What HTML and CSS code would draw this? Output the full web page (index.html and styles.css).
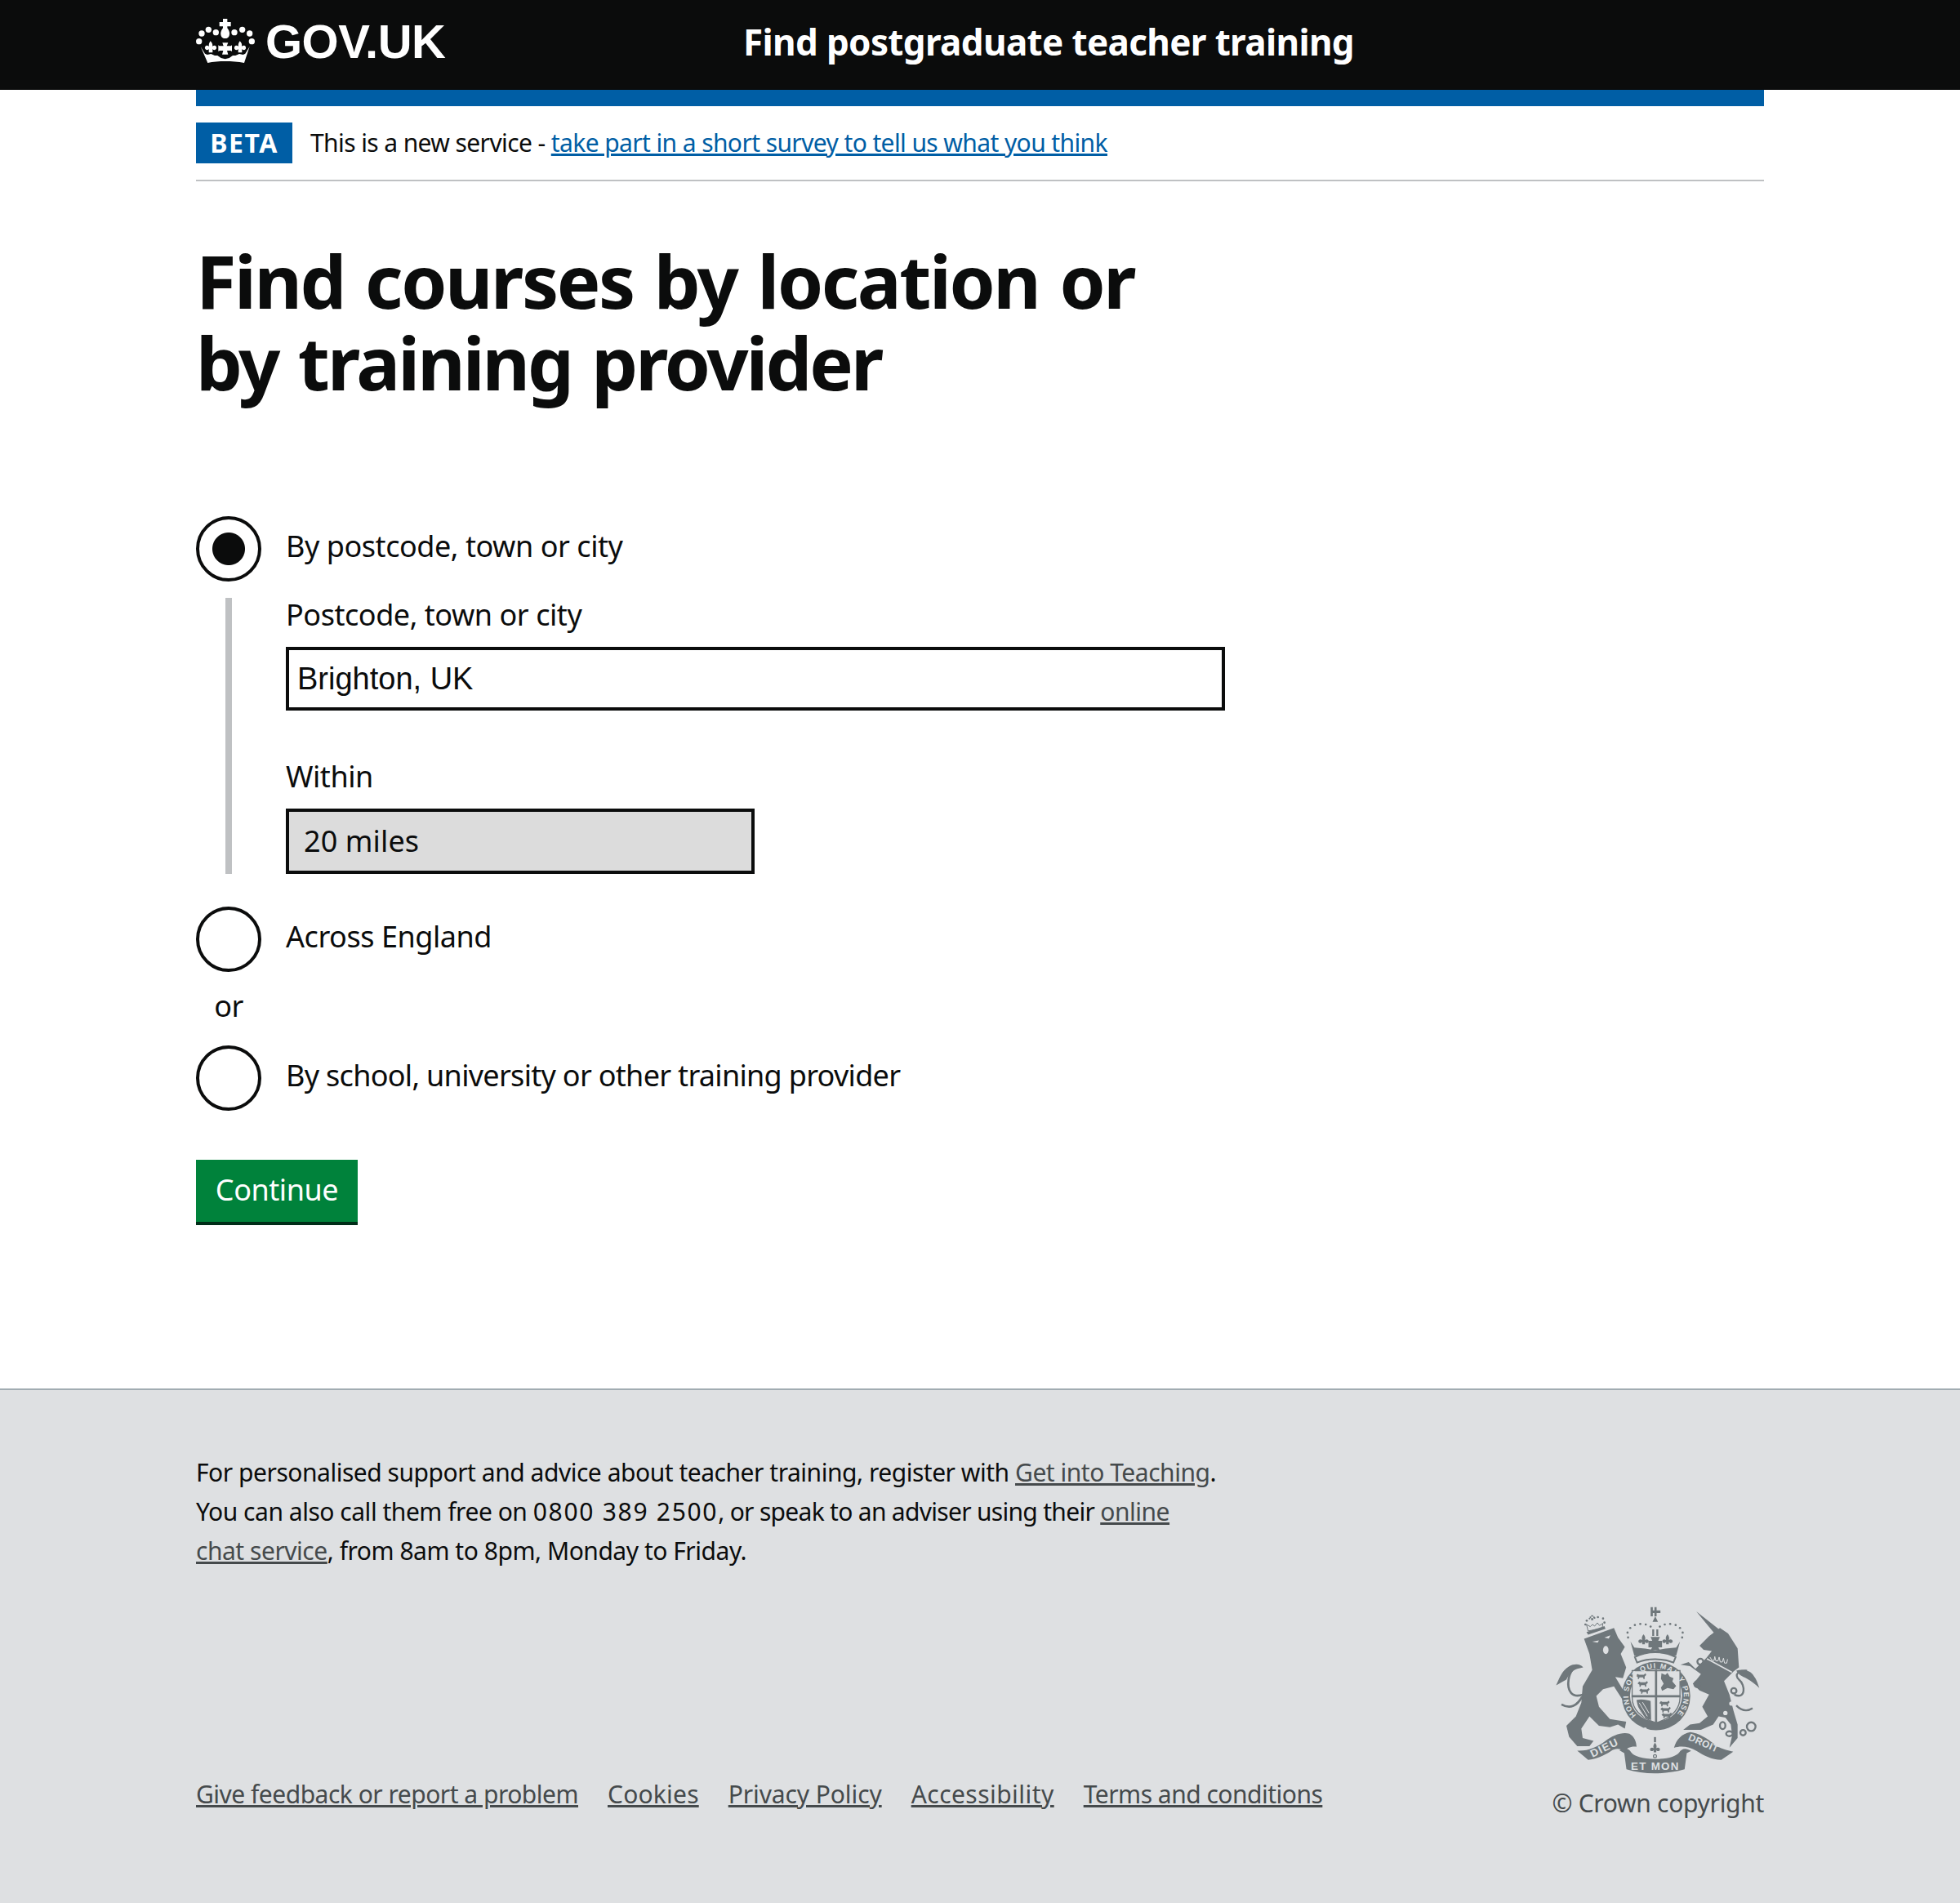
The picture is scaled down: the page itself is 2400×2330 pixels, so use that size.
FILE: index.html
```html
<!DOCTYPE html>
<html lang="en">
<head>
<meta charset="utf-8">
<title>Find postgraduate teacher training</title>
<link rel="stylesheet" href="styles.css">
</head>
<body>
<header class="site-header">
  <div class="wrap header-inner">
    <a class="logo" href="#">
      <svg class="crown" viewBox="0 0 270 210" aria-hidden="true">
        <g fill="#fff">
          <circle cx="26" cy="107" r="11"/><circle cx="36" cy="78" r="11"/><circle cx="61" cy="64" r="11"/><circle cx="88" cy="74" r="11"/>
          <circle cx="156" cy="74" r="11"/><circle cx="185" cy="64" r="11"/><circle cx="212" cy="78" r="11"/><circle cx="220" cy="107" r="11"/>
          <path d="M114 24h16v12h13v16h-13v6c8 10 10 20 7 28-2 7-8 10-15 10s-13-3-15-10c-3-8-1-18 7-28v-6h-13V36h13z"/>
          <path d="M68 106c6 6 9 12 7 19 6-4 13-3 15 3 2 7-4 12-11 10l-3-3v13h-14v-13l-3 3c-7 2-13-3-11-10 2-6 9-7 15-3-2-7 1-13 5-19z"/>
          <path d="M176 106c6 6 9 12 7 19 6-4 13-3 15 3 2 7-4 12-11 10l-3-3v13h-14v-13l-3 3c-7 2-13-3-11-10 2-6 9-7 15-3-2-7 1-13 5-19z"/>
          <path d="M112 112h21l-5 12h15l4-3v23l-5-3h-13l4 14h-22l4-14h-13l-5 3v-23l4 3h15z"/>
          <path d="M32 126l16 26 8 4 14-3 14 6h10l13 9 15 4 15-4 13-9h10l14-6 14 3 8-4 16-26-20 60c-45-8-95-8-134 0z"/>
        </g>
      </svg>
      <span class="logo-text">GOV.UK</span>
    </a>
    <a class="service-name" href="#">Find postgraduate teacher training</a>
  </div>
</header>

<div class="wrap">
  <div class="blue-bar"></div>
  <div class="phase-banner">
    <strong class="phase-tag">BETA</strong>
    <span class="phase-text">This is a new service - <a class="link" href="#">take part in a short survey to tell us what you think</a></span>
  </div>

  <main class="main">
    <h1 class="title">Find courses by location or<br><span class="title-second">by training provider</span></h1>

    <form class="form">
      <label class="radio-row">
        <input class="radio" type="radio" name="l" checked>
        <span class="radio-label">By postcode, town or city</span>
      </label>
      <div class="conditional">
        <label class="field-label" for="q">Postcode, town or city</label>
        <input class="text-input" id="q" type="text" value="Brighton, UK">
        <label class="field-label field-label-second" for="r">Within</label>
        <select class="select" id="r"><option>20 miles</option></select>
      </div>
      <label class="radio-row radio-row-gap">
        <input class="radio" type="radio" name="l">
        <span class="radio-label">Across England</span>
      </label>
      <div class="or">or</div>
      <label class="radio-row">
        <input class="radio" type="radio" name="l">
        <span class="radio-label radio-label-long">By school, university or other training provider</span>
      </label>
      <button class="button" type="button">Continue</button>
    </form>
  </main>
</div>

<footer class="footer">
  <div class="wrap">
    <p class="support">For personalised support and advice about teacher training, register with <a class="foot-link" href="#">Get into Teaching</a>.<br>You can also call them free on <span class="tel">0800 389 2500</span><span class="tight">, or speak to an adviser using their </span><a class="foot-link" href="#">online<br>chat service</a>, from 8am to 8pm, Monday to Friday.</p>
    <div class="footer-meta">
      <ul class="foot-links">
        <li><a class="foot-link" href="#">Give feedback or report a problem</a></li>
        <li class="wide"><a class="foot-link" href="#">Cookies</a></li>
        <li class="mid"><a class="foot-link" href="#">Privacy Policy</a></li>
        <li class="wider"><a class="foot-link" href="#">Accessibility</a></li>
        <li><a class="foot-link" href="#">Terms and conditions</a></li>
      </ul>
      <div class="copyright">
        <svg class="crest" viewBox="60 70 770 625" aria-hidden="true">
          <defs>
            <path id="pl" d="M0 9l6-7 5 3h18l6-5 3 6-6 6v9h-4l-2-6H13l-2 6H7v-7z"/>
            <path id="arc" d="M367 476A102 102 0 1 1 513 476"/>
            <g id="fl"><path d="M0-24c6 7 8 14 5 21 6-4 13-2 14 4 1 6-5 9-10 7l-4-3v8H-5V5l-4 3c-5 2-11-1-10-7 1-6 8-8 14-4-3-7-1-14 5-21z"/></g>
          </defs>
          <g fill="#6f777b">
            <!-- lion -->
            <path d="M175 195L285 155 300 190 325 225 310 250 330 300 318 340 290 335 335 410 345 440 325 432 285 370 245 380 220 405 230 445 270 490 330 500 325 525 300 510 270 520 230 515 195 480 165 525 170 560 210 570 195 590 150 590 120 555 110 515 145 480 165 430 170 370 205 310 195 250z"/>
            <g fill="none" stroke="#6f777b" stroke-width="8">
              <path d="M172 400C130 415 112 385 118 345 122 315 140 292 162 296"/>
              <path d="M168 408C150 440 125 455 92 436"/>
            </g>
            <path d="M72 366C85 340 92 312 120 296 140 286 160 286 172 300L150 305C130 310 115 335 110 345 100 350 85 360 72 366z"/>
            <path d="M184 170l66-22 4 10-64 22z"/>
            <g fill="#dee0e2"><ellipse cx="255" cy="236" rx="10" ry="15"/><path d="M205 205l25-4-5 8zM250 190l22-8-6 12z"/></g>
            <path d="M201 126h8v-18h-8zM196 113h18v6h-18z"/>
            <path d="M190 166l-6-24 14 8 8-8 8 6 10-12 8 10 12-8-2 18z" fill="none" stroke="#6f777b" stroke-width="3"/>
            <g><circle cx="180" cy="142" r="4"/><circle cx="185" cy="128" r="4"/><circle cx="226" cy="115" r="4"/><circle cx="245" cy="120" r="4"/><circle cx="250" cy="135" r="4"/><circle cx="214" cy="118" r="3"/><circle cx="195" cy="120" r="3"/></g>
            <!-- crown -->
            <path d="M428 90h6V78h8v12h14v10h-14v12h-8v-12h-6v12h-8V78h8z"/>
            <path d="M437 112l10 20h-20zM426 160h7v24h-7zM441 160h7v24h-7z"/>
            <g>
              <circle cx="337" cy="190" r="4"/><circle cx="335" cy="172" r="4"/><circle cx="345" cy="155" r="4"/><circle cx="362" cy="144" r="4"/><circle cx="382" cy="140" r="4"/><circle cx="402" cy="142" r="4"/><circle cx="420" cy="150" r="4"/><circle cx="454" cy="150" r="4"/><circle cx="472" cy="142" r="4"/><circle cx="492" cy="140" r="4"/><circle cx="512" cy="144" r="4"/><circle cx="528" cy="155" r="4"/><circle cx="538" cy="172" r="4"/><circle cx="536" cy="190" r="4"/>
            </g>
            <use href="#fl" x="394" y="202"/><use href="#fl" x="482" y="202"/>
            <path d="M420 188h34l-6 14h14v24h-14l6 10h-34l6-10h-14v-24h14z"/>
            <path d="M346 205l14 22 40 4 37 6 37-6 40-4 14-22-14 52H360z"/>
            <path d="M362 262c45-24 105-24 150 0l-8 20c-40-16-94-16-134 0z" fill="#dee0e2" stroke="#6f777b" stroke-width="6"/>
            <!-- garter -->
            <circle cx="440" cy="405" r="126"/>
            <circle cx="440" cy="403" r="96" fill="#dee0e2"/>
            <path d="M352 312h176v98c0 48-40 78-88 94-48-16-88-46-88-94z" fill="#dee0e2" stroke="#6f777b" stroke-width="4"/>
            <path d="M436 308h8v198h-8zM350 402h180v8H350z"/>
            <use href="#pl" x="366" y="322"/><use href="#pl" x="372" y="350"/><use href="#pl" x="378" y="376"/>
            <use href="#pl" x="452" y="422"/><use href="#pl" x="456" y="445"/><use href="#pl" x="460" y="466"/>
            <path d="M460 322l14 6 8-8 8 14 14 6-4 12 14 16-10 12-22-4-20 10-4-12 10-14-10-18z"/>
            <path d="M368 420c20-5 40 0 52 4l2 70c-30-8-46-30-54-74z"/>
            <g fill="none" stroke="#dee0e2" stroke-width="3"><path d="M378 430l30 50M390 428l24 40M372 445l26 40"/></g>
            <text class="crest-text garter"><textPath href="#arc" textLength="470" lengthAdjust="spacing">HONI SOIT QUI MAL Y PENSE</textPath></text>
            <circle cx="400" cy="527" r="6" fill="#dee0e2"/><circle cx="447" cy="541" r="6" fill="#dee0e2"/>
            <!-- unicorn -->
            <path d="M588 94L672 160 655 175z"/>
            <path d="M600 220L635 185 675 155 705 175 740 230 745 300 725 315 690 350 710 400 725 460 740 510 740 560 710 595 720 550 715 510 695 485 670 480 650 510 605 530 540 530 565 510 600 505 630 480 610 445 635 400 600 385 575 360 585 350 605 325 565 295 530 290 560 280 585 305 625 265 645 240 615 235z"/>
            <g fill="none" stroke="#dee0e2" stroke-width="5"><path d="M627 268l92 50"/></g>
            <path d="M638 262l8 12h8l2-14 4 16h8l4-14 4 18h8l4-14 4 18h8l3-14" fill="none" stroke="#dee0e2" stroke-width="3"/>
            <g fill="none" stroke="#6f777b" stroke-width="7">
              <circle cx="603" cy="279" r="11"/><circle cx="592" cy="362" r="11"/><circle cx="726" cy="386" r="10"/>
              <ellipse cx="685" cy="514" rx="10" ry="13"/><ellipse cx="710" cy="544" rx="12" ry="9"/><circle cx="760" cy="540" r="10"/><circle cx="790" cy="518" r="16"/>
              <path d="M728 400C770 420 770 365 745 345 725 325 745 310 775 312"/>
              <path d="M735 440c20 20 42 22 60 10"/>
            </g>
            <path d="M735 312c25-8 55 0 65 20 10 12 15 30 20 44-14-14-30-26-45-34-12-8-28-10-40-30z"/>
            <circle cx="717" cy="433" r="8" fill="#dee0e2"/><circle cx="695" cy="468" r="8" fill="#dee0e2"/>
            <!-- motto -->
            <path d="M150 606c40 2 76-14 104-36 26-20 62-34 88-26 18 10 26 30 26 48-24-2-34 6-46 16-14-10-32-12-48 0-28 18-54 30-84 32z"/>
            <path d="M305 605c18-12 34-8 44 8 8 12 40 24 88 24 46 0 78-10 88-24 10-16 24-18 44-6l-16 8-8 60c-70 20-150 20-214 0l-8-60z"/>
            <path d="M506 596c8-30 28-52 60-58 30 4 62 22 90 46 20 16 44 20 68 26l-44 30c-36 0-64-16-90-32-30-18-60-20-84-12z"/>
            <g transform="translate(436 600) scale(.95)"><use href="#fl"/><path d="M-4-46h8v20h-8z"/><circle cy="28" r="6" fill="none" stroke="#6f777b" stroke-width="4"/></g>
            <text class="crest-text motto" transform="translate(206 632) rotate(-26)">DIEU</text>
            <text class="crest-text motto motto-centre" x="437" y="676">ET MON</text>
            <text class="crest-text motto droit" transform="translate(556 566) rotate(24)">DROIT</text>
          </g>
        </svg>
        <span class="copy-text">© Crown copyright</span>
      </div>
    </div>
  </div>
</footer>
</body>
</html>
```
FILE: styles.css
```css
* { box-sizing: border-box; }
html, body { margin: 0; padding: 0; }
body {
  min-height: 2330px;
  display: flex;
  flex-direction: column;
  background: #fff;
  color: #0b0c0c;
  font-family: "Noto Sans", Arial, sans-serif;
  font-size: 36px;
  line-height: 40px;
  letter-spacing: -0.45px;
}
.wrap { width: 1920px; margin: 0 auto; }

.site-header { height: 110px; background: #0b0c0c; }
.header-inner { display: flex; align-items: center; height: 110px; }
.logo { display: flex; align-items: center; width: 670px; color: #fff; text-decoration: none; }
.crown { width: 90px; height: 70px; margin-left: -5px; margin-top: -10px; margin-right: 0; flex: none; }
.logo-text { font-family: "Liberation Sans", Arial, sans-serif; font-weight: 700; font-size: 58px; line-height: 60px; letter-spacing: -0.5px; margin-top: -8px; }
.service-name { color: #fff; text-decoration: none; font-weight: 700; font-size: 44px; line-height: 50px; letter-spacing: -0.65px; margin-top: -8px; }

.blue-bar { height: 20px; background: #005ea5; }
.phase-banner { display: flex; align-items: center; padding: 20px 0; border-bottom: 2px solid #bfc1c3; font-size: 30px; letter-spacing: -0.6px; }
.phase-tag { display: block; width: 118px; height: 50px; line-height: 50px; text-align: center; background: #005ea5; color: #fff; font-size: 32px; font-weight: 700; letter-spacing: 1.5px; margin-right: 22px; }
.link { color: #005ea5; text-decoration: underline; }

.main { display: block; }
.title { margin: 71px 0 139px; font-size: 90px; line-height: 100px; font-weight: 700; letter-spacing: -2.4px; word-spacing: 4px; }
.title-second { letter-spacing: -3px; }

.form { display: block; }
.radio-row { display: flex; align-items: center; height: 80px; }
.radio-row-gap { margin-top: 40px; }
.radio { appearance: none; -webkit-appearance: none; width: 80px; height: 80px; margin: 0 30px 0 0; border: 4px solid #0b0c0c; border-radius: 50%; background: #fff; flex: none; }
.radio:checked { background: radial-gradient(circle, #0b0c0c 19.5px, #fff 20.5px); }
.radio-label { margin-top: -6px; }
.radio-label-long { letter-spacing: -0.7px; }
.conditional { display: flex; flex-direction: column; align-items: flex-start; margin: 20px 0 0 36px; padding-left: 66px; border-left: 8px solid #bfc1c3; }
.field-label { display: block; height: 40px; margin-bottom: 20px; padding-top: 1px; }
.field-label-second { margin-top: 61px; padding-top: 0; margin-bottom: 19px; }
.text-input { display: block; width: 1150px; height: 78px; padding: 0 10px; border: 4px solid #0b0c0c; border-radius: 0; background: #fff; color: #0b0c0c; font-family: "Liberation Sans", Arial, sans-serif; font-size: 38px; outline: 0; }
.select { display: block; appearance: none; -webkit-appearance: none; width: 574px; height: 80px; padding: 0 18px; border: 4px solid #0b0c0c; border-radius: 0; background: #dcdcdc; color: #0b0c0c; font: inherit; letter-spacing: 0.1px; }
.or { width: 80px; height: 90px; text-align: center; line-height: 83px; }
.button { display: block; width: 198px; height: 80px; margin-top: 60px; padding: 0 0 3px; border: 0; border-bottom: 4px solid #002d18; border-radius: 0; background: #00823b; color: #fff; font: inherit; letter-spacing: inherit; }

.footer { margin-top: 200px; flex: 1; background: #dee0e2; border-top: 2px solid #a1acb2; padding-top: 77px; }
.support { margin: 0; font-size: 30px; line-height: 48px; white-space: nowrap; letter-spacing: -0.47px; }
.tel { letter-spacing: 1.7px; }
.tight { letter-spacing: -0.7px; }
.foot-link { color: #454a4c; text-decoration: underline; }
.footer-meta { display: flex; justify-content: space-between; align-items: flex-end; margin-top: 42px; }
.foot-links { display: flex; gap: 36px; margin: 0 0 11px; padding: 0; list-style: none; font-size: 30px; letter-spacing: -0.5px; }
.foot-links .wide { letter-spacing: 0.2px; }
.foot-links .wider { letter-spacing: 0.45px; }
.foot-links .mid { letter-spacing: -0.1px; }
.copyright { display: flex; flex-direction: column; align-items: flex-end; color: #454a4c; font-size: 30px; letter-spacing: -0.3px; }
.crest { display: block; width: 257px; height: 208px; margin: 0 2px 15px 0; }
.copy-text { display: block; }
.crest-text { fill: #dee0e2; font-family: "Liberation Sans", Arial, sans-serif; font-weight: 700; letter-spacing: 0; }
.garter { font-size: 27px; }
.motto { font-size: 40px; letter-spacing: 4px; }
.motto-centre { text-anchor: middle; }
.droit { font-size: 36px; letter-spacing: 1px; }
```
